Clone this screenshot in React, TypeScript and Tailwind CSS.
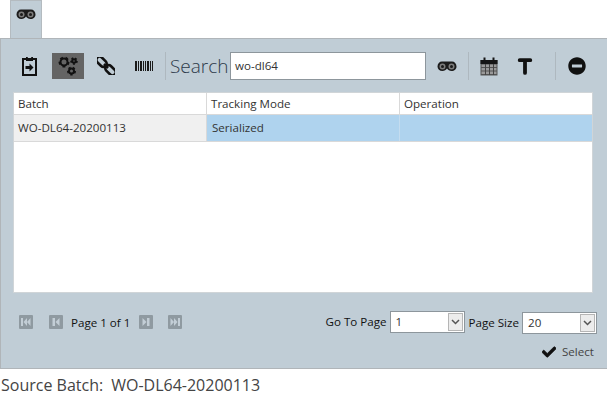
import { FaCheck, FaMinusCircle } from 'react-icons/fa';
import { FaT } from 'react-icons/fa6';

const font = "font-['Open_Sans','Noto_Sans',sans-serif]";

function Binoculars() {
  return (
    <svg width="20" height="10" viewBox="0 0 20 10">
      <path d="M0.500 5.500 C0.500 2.500 2.500 0.500 5 0.500 L15 0.500 C17.500 0.500 19.500 2.500 19.500 5.500 C19.500 8 17.500 10 14.500 10 C12.500 10 11 9 10 7.500 C9 9 7.500 10 5.500 10 C2.500 10 0.500 8 0.500 5.500 Z" fill="#1c1c1c" />
      <circle cx="5.500" cy="5.500" r="3" fill="#7d7d7d" />
      <circle cx="5.500" cy="5.500" r="1.500" fill="#1c1c1c" />
      <circle cx="14.500" cy="5.500" r="3" fill="#7d7d7d" />
      <circle cx="14.500" cy="5.500" r="1.500" fill="#1c1c1c" />
    </svg>
  );
}

function Clipboard() {
  return (
    <svg width="15" height="20" viewBox="0 0 15 20">
      <path d="M1 3 H14 V19 H1 Z" fill="none" stroke="#111" strokeWidth="2" />
      <path d="M4 1 H11 V5 H4 Z" fill="#111" />
      <path d="M5.800 0.500 H9.200 V2 H5.800 Z" fill="#c0cdd6" />
      <path d="M3.500 10 H7.500 V7.500 L11.500 11.500 L7.500 15.500 V13 H3.500 Z" fill="#111" />
    </svg>
  );
}

function Gear({ cx, cy, r }: { cx: number; cy: number; r: number }) {
  const teeth = r * 0.62;
  return (
    <g>
      <circle cx={cx} cy={cy} r={r - 1} fill="none" stroke="#111" strokeWidth="2" />
      <circle cx={cx} cy={cy} r={r} fill="none" stroke="#111" strokeWidth="2" strokeDasharray={`${teeth} ${teeth}`} />
    </g>
  );
}

function Gears() {
  return (
    <svg width="20" height="20" viewBox="0 0 20 20">
      <Gear cx={6} cy={6} r={4.500} />
      <Gear cx={16} cy={5} r={2.800} />
      <Gear cx={13.500} cy={15} r={3.500} />
    </svg>
  );
}

function Chain() {
  return (
    <svg width="18" height="18" viewBox="0 0 18 18">
      <g fill="none" stroke="#111" strokeWidth="2.600">
        <rect x="-1.500" y="1.500" width="12" height="6.500" rx="3.250" transform="rotate(45 4.500 4.750)" />
        <rect x="7.500" y="10" width="12" height="6.500" rx="3.250" transform="rotate(45 13.500 13.250)" />
      </g>
      <path d="M7 7 L11 11" stroke="#111" strokeWidth="2.600" />
    </svg>
  );
}

function Barcode() {
  const bars = [
    [0, 2],
    [3, 1],
    [5, 2],
    [8, 1],
    [10, 1],
    [12, 2],
    [15, 1],
    [17, 1],
  ];
  return (
    <svg width="18" height="10" viewBox="0 0 18 10">
      {bars.map(([x, w]) => (
        <rect key={x} x={x} y="0" width={w} height="10" fill="#1a1a1a" />
      ))}
    </svg>
  );
}

function Calendar() {
  return (
    <svg width="18" height="19" viewBox="0 0 18 19">
      <path d="M0.500 3 H17.500 V18.500 H0.500 Z" fill="#555" />
      <path d="M0.500 3 H17.500 V7 H0.500 Z" fill="#161616" />
      <rect x="3.500" y="0.500" width="2" height="5" fill="#161616" />
      <rect x="12.500" y="0.500" width="2" height="5" fill="#161616" />
      {[7.5, 11, 14.5].map((y) => (
        <rect key={y} x="1.500" y={y} width="15" height="2.500" fill="#9a9a9a" />
      ))}
      {[5, 9, 13].map((x) => (
        <rect key={x} x={x} y="7" width="1" height="11" fill="#444" />
      ))}
    </svg>
  );
}

function PagerIcon({ kind }: { kind: 'first' | 'prev' | 'next' | 'last' }) {
  const paths = {
    first: 'M2 3 H4 V11 H2 Z M4.500 7 L8 3 V11 Z M8 7 L11.500 3 V11 Z',
    prev: 'M3.500 3 H6 V11 H3.500 Z M6.500 7 L10.500 3 V11 Z',
    next: 'M10.500 3 H8 V11 H10.500 Z M7.500 7 L3.500 3 V11 Z',
    last: 'M12 3 H10 V11 H12 Z M6 3 L9.500 7 L6 11 Z M2.500 3 L6 7 L2.500 11 Z',
  };
  return (
    <span className="flex h-[14px] w-[14px] items-center justify-center rounded-[1px] bg-[#8f9aa1]">
      <svg width="14" height="14" viewBox="0 0 14 14">
        <path d={paths[kind]} fill="#c3ced6" />
      </svg>
    </span>
  );
}

function Select({ value, width }: { value: string; width: string }) {
  return (
    <div className={`flex h-[22px] items-center justify-between border border-[#8d969c] bg-white pr-px pl-[5px] ${width}`}>
      <span className="text-[11.6px] text-[#333]">{value}</span>
      <span className="flex h-[18px] w-[15px] items-center justify-center border border-[#b5b5b5] bg-[#ececec]">
        <svg width="9" height="6" viewBox="0 0 9 6">
          <path d="M1 1 L4.500 4.500 L8 1" fill="none" stroke="#555" strokeWidth="1.500" />
        </svg>
      </span>
    </div>
  );
}

export default function App() {
  return (
    <div className={`flex h-[408px] w-[607px] flex-col overflow-hidden bg-white ${font}`}>
      {/* Tab strip */}
      <div className="flex h-[38px] pl-[10px]">
        <div className="flex h-[39px] w-[32px] justify-center border-x border-t border-[#b4bbc0] bg-[#c0cdd6] pt-[8px]">
          <span className="h-[10px]">
            <Binoculars />
          </span>
        </div>
      </div>

      {/* Main panel */}
      <div className="flex h-[331px] flex-col border-y border-l border-[#b0b5b9] bg-[#c0cdd6]">
        {/* Toolbar */}
        <div className="flex h-[53px] items-center pt-[1px] pl-[21px]">
          <span className="flex w-[17px]">
            <Clipboard />
          </span>
          <span className="ml-[13px] flex h-[26px] w-[32px] items-center justify-center bg-[#646464]">
            <Gears />
          </span>
          <span className="ml-[13px] flex w-[18px]">
            <Chain />
          </span>
          <span className="ml-[20px] flex w-[18px]">
            <Barcode />
          </span>
          <span className="ml-[12px] h-[28px] w-px bg-[#aeb8bf]" />
          <span className="ml-[4px] w-[56px] text-[19px] leading-none font-light whitespace-nowrap text-[#2c3a4a]">Search</span>
          <div className="ml-[4px] flex h-[28px] w-[196px] items-center border border-[#8d969c] bg-white pl-[4px] text-[11.6px] text-[#333]">
            wo-dl64
          </div>
          <span className="ml-[11px] flex">
            <Binoculars />
          </span>
          <span className="ml-[11px] h-[28px] w-px bg-[#aeb8bf]" />
          <span className="ml-[11px] flex">
            <Calendar />
          </span>
          <span className="ml-[19px] flex w-[16px] justify-center">
            <FaT size={17} color="#111" stroke="#111" strokeWidth={50} />
          </span>
          <span className="ml-[22px] h-[28px] w-px bg-[#aeb8bf]" />
          <span className="ml-[12px] flex">
            <FaMinusCircle size={18} color="#111" />
          </span>
        </div>

        {/* Grid */}
        <div className="ml-[12px] h-[201px] w-[580px] border border-[#d0d5d8] bg-white text-[11.6px] text-[#333]">
          <div className="flex h-[22px] border-b border-[#d9d9d9]">
            <div className="flex w-[193px] items-center border-r border-[#d9d9d9] pl-[4px]">Batch</div>
            <div className="flex w-[193px] items-center border-r border-[#d9d9d9] pl-[4px]">Tracking Mode</div>
            <div className="flex flex-1 items-center pl-[4px]">Operation</div>
          </div>
          <div className="flex h-[27px] border-b border-[#d9d9d9]">
            <div className="flex w-[193px] items-center border-r border-[#d9d9d9] bg-[#f0f0f0] pl-[4px]">WO-DL64-20200113</div>
            <div className="flex w-[193px] items-center border-r border-[#c4dcef] bg-[#afd3ee] pl-[5px]">Serialized</div>
            <div className="flex-1 bg-[#afd3ee]" />
          </div>
        </div>

        {/* Pager */}
        <div className="flex h-[50px] items-start justify-between pt-[18px] pr-[10px] pl-[18px]">
          <div className="flex items-center pt-[2px]">
            <PagerIcon kind="first" />
            <span className="ml-[16px]">
              <PagerIcon kind="prev" />
            </span>
            <span className="mt-px ml-[8px] w-[58px] text-[11.6px] whitespace-nowrap text-[#111]">Page 1 of 1</span>
            <span className="ml-[10px]">
              <PagerIcon kind="next" />
            </span>
            <span className="ml-[15px]">
              <PagerIcon kind="last" />
            </span>
          </div>
          <div className="flex items-start">
            <span className="mr-[3px] text-[11.6px] leading-[22px] text-[#111]">Go To Page</span>
            <Select value="1" width="w-[75px]" />
            <span className="mt-px mr-[3px] ml-[4px] text-[11.6px] leading-[22px] text-[#111]">Page Size</span>
            <span className="mt-px">
              <Select value="20" width="w-[75px]" />
            </span>
          </div>
        </div>

        {/* Select action */}
        <div className="flex items-center justify-end gap-[6px] pr-[13px]">
          <FaCheck size={14} color="#111" stroke="#111" strokeWidth={30} />
          <span className="text-[11.6px] text-[#444]">Select</span>
        </div>
      </div>

      {/* Footer */}
      <div className="flex h-[34px] items-start gap-[8px] pt-[5px] pl-px text-[16px] leading-[22px] text-[#444]">
        <span>Source Batch:</span>
        <span>WO-DL64-20200113</span>
      </div>
    </div>
  );
}
